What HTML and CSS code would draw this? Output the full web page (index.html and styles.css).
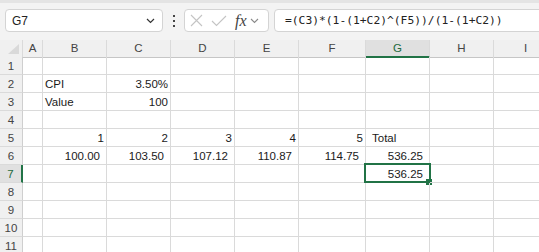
FILE: index.html
```html
<!DOCTYPE html>
<html lang="en">
<head>
    <meta charset="UTF-8">
    <title>Sheet - G7</title>
    <link rel="stylesheet" href="styles.css">
</head>
<body>
    <div class="edge"></div>

    <!-- Formula bar -->
    <div class="toolbar">
        <div class="namebox">
            <span>G7</span>
            <svg class="chev" width="9" height="6" viewBox="0 0 9 6"><path d="M1 1 L4.5 4.5 L8 1" fill="none" stroke="#333" stroke-width="1.2"/></svg>
        </div>
        <div class="dots"><i></i><i></i><i></i></div>
        <div class="fxbox">
            <svg width="13" height="13" viewBox="0 0 13 13"><path d="M1 1 L12 12 M12 1 L1 12" stroke="#c4c4c4" stroke-width="1.1"/></svg>
            <svg class="check" width="16" height="12" viewBox="0 0 16 12"><path d="M1 6 L5.5 10.5 L15 1" fill="none" stroke="#c4c4c4" stroke-width="1.1"/></svg>
            <span class="fx">fx</span>
            <svg width="9" height="6" viewBox="0 0 9 6"><path d="M1 1 L4.5 4.5 L8 1" fill="none" stroke="#8a8a8a" stroke-width="1.1"/></svg>
        </div>
        <div class="formula">=(C3)*(1-(1+C2)^(F5))/(1-(1+C2))</div>
    </div>

    <!-- Grid -->
    <div class="sheet">
        <div class="row head">
            <div class="corner"><span class="tri"></span></div>
            <div>A</div><div>B</div><div>C</div><div>D</div><div>E</div><div>F</div><div class="sel">G</div><div>H</div><div>I</div>
        </div>
        <div class="row">
            <div class="rh">1</div><div></div><div></div><div></div><div></div><div></div><div></div><div></div><div></div><div></div>
        </div>
        <div class="row">
            <div class="rh">2</div><div></div><div>CPI</div><div class="num">3.50%</div><div></div><div></div><div></div><div></div><div></div><div></div>
        </div>
        <div class="row">
            <div class="rh">3</div><div></div><div>Value</div><div class="num">100</div><div></div><div></div><div></div><div></div><div></div><div></div>
        </div>
        <div class="row">
            <div class="rh">4</div><div></div><div></div><div></div><div></div><div></div><div></div><div></div><div></div><div></div>
        </div>
        <div class="row">
            <div class="rh">5</div><div></div><div class="num">1</div><div class="num">2</div><div class="num">3</div><div class="num">4</div><div class="num">5</div><div class="label">Total</div><div></div><div></div>
        </div>
        <div class="row">
            <div class="rh">6</div><div></div><div class="num fmt">100.00</div><div class="num fmt">103.50</div><div class="num fmt">107.12</div><div class="num fmt">110.87</div><div class="num fmt">114.75</div><div class="num fmt">536.25</div><div></div><div></div>
        </div>
        <div class="row">
            <div class="rh sel">7</div><div></div><div></div><div></div><div></div><div></div><div></div><div class="num fmt active">536.25<span class="cursor"></span><span class="handle"></span></div><div></div><div></div>
        </div>
        <div class="row">
            <div class="rh">8</div><div></div><div></div><div></div><div></div><div></div><div></div><div></div><div></div><div></div>
        </div>
        <div class="row">
            <div class="rh">9</div><div></div><div></div><div></div><div></div><div></div><div></div><div></div><div></div><div></div>
        </div>
        <div class="row">
            <div class="rh">10</div><div></div><div></div><div></div><div></div><div></div><div></div><div></div><div></div><div></div>
        </div>
        <div class="row">
            <div class="rh">11</div><div></div><div></div><div></div><div></div><div></div><div></div><div></div><div></div><div></div>
        </div>
    </div>
</body>
</html>
```

FILE: styles.css
```css
* {
    margin: 0;
    padding: 0;
    box-sizing: border-box;
}

body {
    background: #fff;
    color: #1a1a1a;
    font-family: "Liberation Sans", Arial, sans-serif;
    font-size: 11.5px;
    overflow: hidden;
    width: 539px;
    height: 252px;
}

.edge {
    height: 3px;
    background: #e4e4e4;
}

/* Formula bar */
.toolbar {
    height: 37px;
    background: #f3f3f3;
    display: flex;
    align-items: flex-start;
    padding: 6px 0 0 5px;
}

.namebox,
.fxbox,
.formula {
    height: 23px;
    background: #fff;
    border: 1px solid #d4d4d4;
    border-radius: 4px;
    display: flex;
    align-items: center;
}

.namebox {
    width: 158px;
    padding: 0 6px;
    justify-content: space-between;
    font-size: 12px;
    color: #222;
}

.namebox .chev {
    margin-right: 1px;
}

.dots {
    width: 21px;
    height: 23px;
    display: flex;
    flex-direction: column;
    align-items: center;
    justify-content: center;
    gap: 3px;
}

.dots i {
    display: block;
    width: 2px;
    height: 2px;
    background: #444;
}

.fxbox {
    width: 85px;
    padding: 0 4px 0 5px;
    gap: 0;
}

.fxbox .check {
    margin-left: 8px;
}

.fx {
    font-family: "Liberation Serif", "Times New Roman", serif;
    font-style: italic;
    font-size: 16px;
    color: #444;
    margin: 0 3px 0 8px;
}

.formula {
    flex: 1;
    margin-left: 5px;
    margin-right: -10px;
    padding-left: 10px;
    font-family: "DejaVu Sans Mono", "Liberation Mono", monospace;
    font-size: 11.3px;
    color: #222;
}

/* Grid */
.row {
    display: grid;
    grid-template-columns: 23px 20px 64px 64px 64px 64px 67px 64px 64px 64px;
    height: 18px;
    width: 558px;
}

.row > div {
    border-right: 1px solid #dadada;
    border-bottom: 1px solid #dadada;
    padding: 1px 2px 0;
    line-height: 16px;
    white-space: nowrap;
    position: relative;
}

.row.head {
    height: 17px;
    background: #f0f0f0;
}

.row.head > div {
    text-align: center;
    color: #444;
    border-bottom-color: #c6c6c6;
    padding-top: 0;
}

.row.head > div.sel {
    background: #e0e0e0;
    color: #1d6b40;
    border-bottom: 2px solid #217346;
}

.corner {
    background: #f0f0f0;
}

.tri {
    position: absolute;
    left: 8px;
    top: 4px;
    width: 0;
    height: 0;
    border-left: 11px solid transparent;
    border-bottom: 10px solid #d9d9d9;
}

.row > .rh {
    background: #f0f0f0;
    color: #444;
    text-align: center;
    padding: 1px 0 0;
    border-right-color: #cfcfcf;
}

.row > .rh.sel {
    background: #e0e0e0;
    color: #1d6b40;
    border-right: 2px solid #217346;
}

.num {
    text-align: right;
}

.num.fmt {
    padding-right: 6px;
}

.label {
    padding-left: 6px !important;
}

.cursor {
    position: absolute;
    left: -2px;
    top: -2px;
    right: -2px;
    bottom: -1px;
    border: 2px solid #217346;
}

.handle {
    position: absolute;
    right: -3px;
    bottom: -3px;
    width: 6px;
    height: 6px;
    background: #217346;
}
```
